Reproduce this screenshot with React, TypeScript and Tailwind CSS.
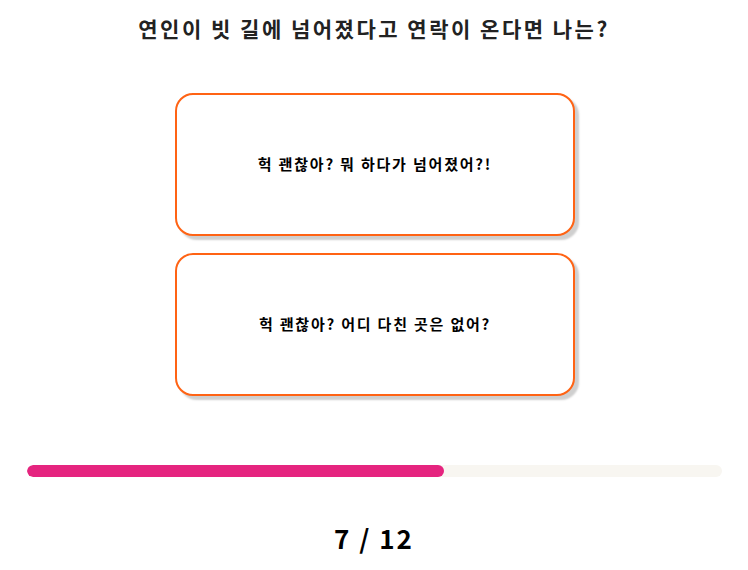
export default function App() {
  const current = 7
  const total = 12
  const answers = ['헉 괜찮아? 뭐 하다가 넘어졌어?!', '헉 괜찮아? 어디 다친 곳은 없어?']

  return (
    <div
      className="min-h-screen bg-white flex flex-col items-center"
      style={{ fontFamily: '"Noto Sans CJK KR", "Noto Sans", sans-serif' }}
    >
      {/* Question */}
      <h1 className="mt-[13px] text-[21px] leading-[30px] tracking-[2.5px] font-bold text-[#222222]">
        연인이 빗 길에 넘어졌다고 연락이 온다면 나는?
      </h1>

      {/* Answers */}
      <div className="mt-[50px] ml-[2px] flex flex-col gap-[17px]">
        {answers.map((a) => (
          <button
            key={a}
            className="w-[400px] h-[143px] rounded-[18px] border-2 border-[#ff6314] bg-white shadow-[4px_4px_2px_#cfcfcf] flex items-center justify-center text-[15px] tracking-[1.8px] font-bold text-black"
          >
            {a}
          </button>
        ))}
      </div>

      {/* Progress */}
      <div className="mt-[69px] w-[695px] h-[12px] rounded-full bg-[#f8f6f1] overflow-hidden">
        <div className="h-full w-[60%] rounded-full bg-[#e5247f]" />
      </div>

      <div className="mt-[43px] text-[26px] leading-[36px] tracking-[2px] font-bold text-black">
        {current} / {total}
      </div>
    </div>
  )
}
